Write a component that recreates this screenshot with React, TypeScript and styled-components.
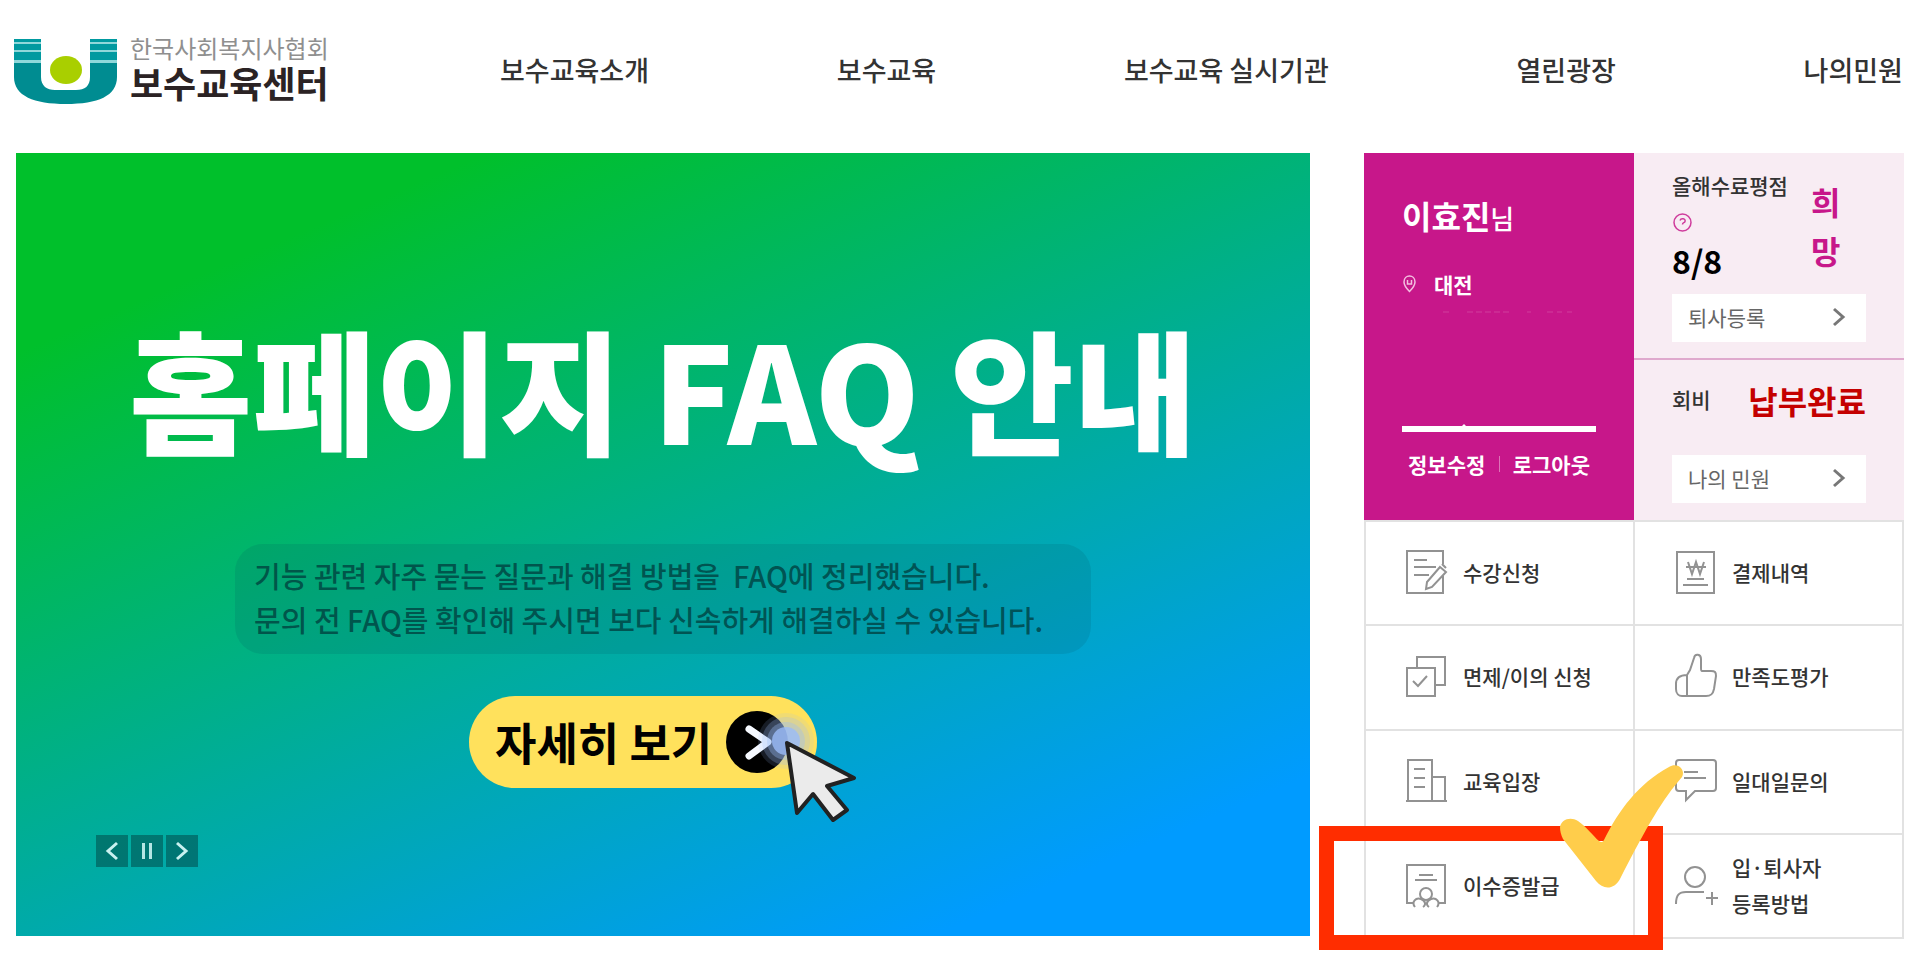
import React from "react";
import styled, { createGlobalStyle } from "styled-components";

const MAGENTA = "#c7178a";

const GlobalStyle = createGlobalStyle`
  *, *::before, *::after { box-sizing: border-box; }
  body {
    margin: 0;
    background: #fff;
    color: #333;
    font-family: "Noto Sans CJK KR", "Noto Sans", sans-serif;
    font-size: 21px;
    word-break: keep-all;
  }
  a { color: inherit; text-decoration: none; }
  button { font: inherit; border: 0; cursor: pointer; }
  h1, h2, p, ul { margin: 0; padding: 0; }
  ul { list-style: none; }
  svg { display: block; flex: none; }
`;

const Header = styled.header`
  display: flex;
  align-items: center;
  height: 153px;
  padding: 0 17px 10px 14px;
`;

const Logo = styled.a`
  display: flex;
  align-items: center;
  gap: 13px;
  flex: 0 0 330px;
  white-space: nowrap;
`;

const LogoText = styled.span`
  display: flex;
  flex-direction: column;
  padding-bottom: 8px;
`;

const LogoSmall = styled.span`
  font-size: 24px;
  line-height: 24px;
  font-weight: 400;
  color: #8f8f8f;
`;

const LogoLarge = styled.span`
  padding-top: 4px;
  font-size: 36px;
  line-height: 36px;
  font-weight: 700;
  color: #2b2324;
`;

const Nav = styled.nav`
  flex: 1;
  padding: 0 0 4px 156px;
`;

const NavList = styled.ul`
  display: flex;
  justify-content: space-between;
  font-size: 27px;
  line-height: 40px;
  font-weight: 500;
  white-space: nowrap;
`;

const Main = styled.main`
  display: grid;
  grid-template-columns: minmax(0, 1fr) 540px;
  align-items: start;
  gap: 54px;
  padding: 0 16px 20px;
`;

const Banner = styled.section`
  display: flex;
  flex-direction: column;
  align-items: center;
  padding: 164px 0 69px;
  background: linear-gradient(157deg, #00c02b 15%, #009bff 88%);
`;

const BannerTitle = styled.h1`
  font-size: 134px;
  line-height: 140px;
  font-weight: 900;
  color: #fff;
  white-space: nowrap;
`;

const BannerText = styled.p`
  margin-top: 87px;
  width: 856px;
  padding: 9px 19px 13px;
  border-radius: 28px;
  background: rgba(0, 80, 90, 0.14);
  color: rgba(0, 60, 60, 0.75);
  font-size: 29px;
  line-height: 44px;
  font-weight: 500;
  white-space: pre;
`;

const MoreWrap = styled.div`
  position: relative;
  margin-top: 42px;
  padding-right: 40px;
`;

const MoreButton = styled.button`
  display: flex;
  align-items: center;
  justify-content: space-between;
  width: 348px;
  height: 92px;
  padding: 0 28px 0 26px;
  border-radius: 46px;
  background: #ffe15c;
  color: #000;
  font-size: 45px;
  line-height: 60px;
  font-weight: 700;
  white-space: nowrap;
`;

const Pointer = styled.svg`
  position: absolute;
  right: 0;
  top: 6px;
`;

const Controls = styled.div`
  display: flex;
  gap: 3px;
  align-self: flex-start;
  margin: 47px 0 0 80px;
`;

const ControlButton = styled.button`
  display: flex;
  align-items: center;
  justify-content: center;
  width: 32px;
  height: 32px;
  padding: 0;
  background: rgba(0, 60, 60, 0.48);
`;

const Side = styled.aside`
  display: flex;
  flex-direction: column;
`;

const Summary = styled.div`
  display: grid;
  grid-template-columns: 1fr 1fr;
  min-height: 367px;
`;

const Profile = styled.section`
  display: flex;
  flex-direction: column;
  padding: 38px 38px 0;
  background: ${MAGENTA};
  color: #fff;
  font-weight: 700;
`;

const UserName = styled.h2`
  font-size: 32px;
  line-height: 48px;
  font-weight: 700;
`;

const Honorific = styled.span`
  font-size: 26px;
  font-weight: 500;
`;

const Region = styled.p`
  display: flex;
  align-items: center;
  gap: 18px;
  margin-top: 26px;
  padding-left: 1px;
  line-height: 32px;
`;

const Trace = styled.svg`
  margin: 11px 0 0 39px;
`;

const Rule = styled.svg`
  margin-top: 111px;
`;

const ProfileLinks = styled.div`
  display: flex;
  align-items: center;
  justify-content: space-between;
  margin-top: 16px;
  padding: 0 6px;
  line-height: 32px;
`;

const Separator = styled.i`
  width: 1px;
  height: 16px;
  background: #dd74b8;
`;

const Status = styled.div`
  display: grid;
  grid-template-rows: 207px 1fr;
  background: #f8ecf3;
`;

const StatusCard = styled.section<{ $divided?: boolean }>`
  display: flex;
  flex-direction: column;
  justify-content: space-between;
  padding: ${(p) => (p.$divided ? "16px 38px" : "23px 38px 17px")};
  border-bottom: ${(p) => (p.$divided ? "2px solid #dfa9cd" : "0")};
`;

const StatusRow = styled.div`
  display: flex;
  justify-content: space-between;
  align-items: flex-start;
  white-space: nowrap;
`;

const Label = styled.span`
  display: block;
  line-height: 32px;
  font-weight: 500;
`;

const Score = styled.strong`
  display: block;
  font-size: 32px;
  line-height: 40px;
  color: #000;
`;

const HelpButton = styled.button`
  display: block;
  margin: 12px 0 8px 1px;
  padding: 0;
  background: none;
`;

const Grade = styled.strong`
  width: 30px;
  margin: 8px 25px 0 0;
  color: ${MAGENTA};
  font-size: 32px;
  line-height: 49px;
  white-space: normal;
  word-break: break-all;
`;

const Paid = styled.strong`
  color: #c40000;
  font-size: 32px;
  line-height: 34px;
`;

const WhiteButton = styled.button`
  display: flex;
  align-items: center;
  justify-content: space-between;
  width: 100%;
  height: 48px;
  padding: 0 20px 2px 16px;
  background: #fff;
  color: #666;
  font-size: 21px;
`;

const Menu = styled.ul`
  display: grid;
  grid-template-columns: 1fr 1fr;
  grid-auto-rows: minmax(104px, 1fr);
  border: solid #e2e2e2;
  border-width: 2px 0 0 2px;
  min-height: 419px;
`;

const MenuCell = styled.li`
  position: relative;
  border: solid #e2e2e2;
  border-width: 0 2px 2px 0;
`;

const MenuLink = styled.a`
  display: flex;
  align-items: center;
  gap: 13px;
  height: 100%;
  padding: 0 0 2px 40px;
  line-height: 36px;
  font-weight: 500;
  white-space: pre-line;
`;

const Highlight = styled.div`
  position: absolute;
  z-index: 1;
  inset: -9px -30px -13px -47px;
  border: 15px solid #ff2d00;
  pointer-events: none;
`;

const CheckMark = styled.svg`
  position: absolute;
  z-index: 2;
  right: -51px;
  top: -71px;
  pointer-events: none;
`;

const Icon = ({ children }: { children: React.ReactNode }) => (
  <svg width="44" height="46" viewBox="0 0 44 46" fill="none" stroke="#929292" strokeWidth="2" aria-hidden="true">
    {children}
  </svg>
);

const Chevron = ({ color, flip }: { color: string; flip?: boolean }) => (
  <svg width="14" height="20" viewBox="0 0 14 20" fill="none" stroke={color} strokeWidth="3" aria-hidden="true">
    <path d={flip ? "M12 2 3 10l9 8" : "M2 2l9 8-9 8"} />
  </svg>
);

const menu: { label: string; marked?: boolean; icon: React.ReactNode }[] = [
  {
    label: "수강신청",
    icon: (
      <>
        <path d="M37 15V2H1v42h36V27M8 11h13M8 18h22M8 26h15" />
        <path d="M34 18l6 5-14 15-6 2 1-7zM36 15l4 4" />
      </>
    ),
  },
  {
    label: "결제내역",
    icon: (
      <>
        <path d="M2 3h37v41H2zM12 30h17M8 36h25" />
        <path d="M13 13l4 12 4-12 4 12 4-12M11 18h20" />
      </>
    ),
  },
  {
    label: "면제/이의 신청",
    icon: (
      <>
        <path d="M1 15h28v28H1zM11 15V4h28v28H29" />
        <path d="M7 28l5 5 9-10" />
      </>
    ),
  },
  {
    label: "만족도평가",
    icon: (
      <path d="M12 43V22C4 22 1 25 1 31v5c0 5 3 7 6 7h24c5 0 7-2 8-7l2-13c0-4-1-5-5-5h-9c-1 0-1-1-1-3V6c0-5-6-6-7-1l-4 12-3 5" />
    ),
  },
  {
    label: "교육입장",
    icon: <path d="M2 43V2h24v41M26 19h13v24M0 43h41M8 11h11M8 20h11M8 29h11" />,
  },
  {
    label: "일대일문의",
    icon: <path d="M4 2h34q3 0 3 3v25q0 3-3 3H20l-9 9v-9H4q-3 0-3-3V5q0-3 3-3zM9 14h14M9 20h22" />,
  },
  {
    label: "이수증발급",
    marked: true,
    icon: (
      <>
        <path d="M8 41H1V3h38v38h-7M13 13h14M9 18h22" />
        <circle cx="20" cy="32" r="6" />
        <path d="M9 45c-4-5 1-10 6-8s5 6 2 8M31 45c4-5-1-10-6-8s-5 6-2 8" />
      </>
    ),
  },
  {
    label: "입·퇴사자\n등록방법",
    icon: (
      <>
        <circle cx="20" cy="15" r="10" />
        <path d="M1 42c0-9 3-12 10-12h18M31 36h12M37 30v13" />
      </>
    ),
  },
];

const navItems = ["보수교육소개", "보수교육", "보수교육 실시기관", "열린광장", "나의민원"];

export default function App() {
  return (
    <>
      <GlobalStyle />
      <Header>
        <Logo href="#">
          <svg width="103" height="66" viewBox="0 0 103 66" aria-hidden="true">
            <path
              fill="#008c91"
              d="M0 24h27v14c0 9 6 13 14 13h21c9 0 14-4 14-13V24h27v14c0 19-19 27-51 27S0 57 0 38z"
            />
            <path fill="#009aa0" d="M0 0h27v3H0zM76 0h27v3H76zM0 5h27v6H0zM76 5h27v6H76zM0 13h27v8H0zM76 13h27v8H76z" />
            <path fill="#8fd8da" d="M0 3h27v2H0zM76 3h27v2H76zM0 11h27v2H0zM76 11h27v2H76zM0 21h27v3H0zM76 21h27v3H76z" />
            <ellipse cx="52" cy="31" rx="16" ry="14" fill="#a9cf00" />
          </svg>
          <LogoText>
            <LogoSmall>한국사회복지사협회</LogoSmall>
            <LogoLarge>보수교육센터</LogoLarge>
          </LogoText>
        </Logo>
        <Nav>
          <NavList>
            {navItems.map((item) => (
              <li key={item}>
                <a href="#">{item}</a>
              </li>
            ))}
          </NavList>
        </Nav>
      </Header>
      <Main>
        <Banner>
          <BannerTitle>홈페이지 FAQ 안내</BannerTitle>
          <BannerText>
            {"기능 관련 자주 묻는 질문과 해결 방법을  FAQ에 정리했습니다.\n문의 전 FAQ를 확인해 주시면 보다 신속하게 해결하실 수 있습니다."}
          </BannerText>
          <MoreWrap>
            <MoreButton>
              자세히 보기
              <svg width="64" height="64" viewBox="0 0 64 64" overflow="visible" aria-hidden="true">
                <circle cx="32" cy="32" r="31" fill="#000" />
                <path d="M24 19l19 13-19 14" fill="none" stroke="#f6f9ff" strokeWidth="7" strokeLinecap="round" strokeLinejoin="round" />
                <g fill="#9bbcf7">
                  <circle cx="61" cy="31" r="28" opacity="0.15" />
                  <circle cx="61" cy="31" r="24" opacity="0.25" />
                  <circle cx="61" cy="31" r="19" opacity="0.35" />
                  <circle cx="61" cy="31" r="14" opacity="0.8" />
                </g>
              </svg>
            </MoreButton>
            <Pointer width="74" height="120" viewBox="0 0 74 120" aria-hidden="true">
              <path
                d="M4 41l67 35-27 8 20 24-14 10-20-26-16 19z"
                fill="#ebebeb"
                stroke="#222"
                strokeWidth="4"
                strokeLinejoin="round"
              />
            </Pointer>
          </MoreWrap>
          <Controls>
            <ControlButton aria-label="이전">
              <Chevron color="#c9f1f0" flip />
            </ControlButton>
            <ControlButton aria-label="정지">
              <svg width="10" height="16" viewBox="0 0 10 16" fill="#b5e6e4" aria-hidden="true">
                <path d="M0 0h3v16H0zM7 0h3v16H7z" />
              </svg>
            </ControlButton>
            <ControlButton aria-label="다음">
              <Chevron color="#c9f1f0" />
            </ControlButton>
          </Controls>
        </Banner>
        <Side>
          <Summary>
            <Profile>
              <UserName>
                이효진<Honorific>님</Honorific>
              </UserName>
              <Region>
                <svg width="13" height="18" viewBox="0 0 13 18" fill="none" stroke="#f3bfe0" strokeWidth="1.500" aria-hidden="true">
                  <path d="M6.500 16.500C3 13 1 10 1 7c0-8 11-8 11 0 0 3-2 6-5.500 9.500z" />
                  <path d="M4.500 5v4h4V5" />
                </svg>
                대전
              </Region>
              <Trace width="136" height="2" viewBox="0 0 136 2" stroke="#d03f9c" strokeWidth="1" aria-hidden="true">
                <path d="M2 1h8M26 1h44" strokeDasharray="6 3" />
                <path d="M86 1h4M106 1h6M116 1h5M126 1h5" />
              </Trace>
              <Rule width="194" height="8" viewBox="0 0 194 8" fill="#fff" aria-hidden="true">
                <path d="M0 2h60l2-2 2 2h130v6H0z" />
              </Rule>
              <ProfileLinks>
                <a href="#">정보수정</a>
                <Separator />
                <a href="#">로그아웃</a>
              </ProfileLinks>
            </Profile>
            <Status>
              <StatusCard $divided>
                <StatusRow>
                  <div>
                    <Label>올해수료평점</Label>
                    <HelpButton aria-label="도움말">
                      <svg width="19" height="19" viewBox="0 0 19 19" fill="none" stroke="#cf3c9c" strokeWidth="1.500" aria-hidden="true">
                        <circle cx="9.500" cy="9.500" r="8.500" />
                        <path d="M7 7.500c1-3 6-2 5 1-.5 1.500-2.500 1-2.500 3" />
                      </svg>
                    </HelpButton>
                    <Score>8/8</Score>
                  </div>
                  <Grade>희망</Grade>
                </StatusRow>
                <WhiteButton>
                  퇴사등록
                  <Chevron color="#777" />
                </WhiteButton>
              </StatusCard>
              <StatusCard>
                <StatusRow>
                  <Label>회비</Label>
                  <Paid>납부완료</Paid>
                </StatusRow>
                <WhiteButton>
                  나의 민원
                  <Chevron color="#777" />
                </WhiteButton>
              </StatusCard>
            </Status>
          </Summary>
          <Menu>
            {menu.map((item) => (
              <MenuCell key={item.label}>
                <MenuLink href="#">
                  <Icon>{item.icon}</Icon>
                  {item.label}
                </MenuLink>
                {item.marked && (
                  <>
                    <Highlight />
                    <CheckMark width="126" height="125" viewBox="0 0 126 125" fill="#ffcd4b" aria-hidden="true">
                      <path d="M2 63c1-7 10-11 18-6 9 6 15 15 21 20 2 2 4 1 5-1C61 46 80 20 111 3c8-5 17 2 13 10C105 35 90 60 62 115c-6 11-17 11-24 2L5 75c-2-4-3-8-3-12z" />
                    </CheckMark>
                  </>
                )}
              </MenuCell>
            ))}
          </Menu>
        </Side>
      </Main>
    </>
  );
}
